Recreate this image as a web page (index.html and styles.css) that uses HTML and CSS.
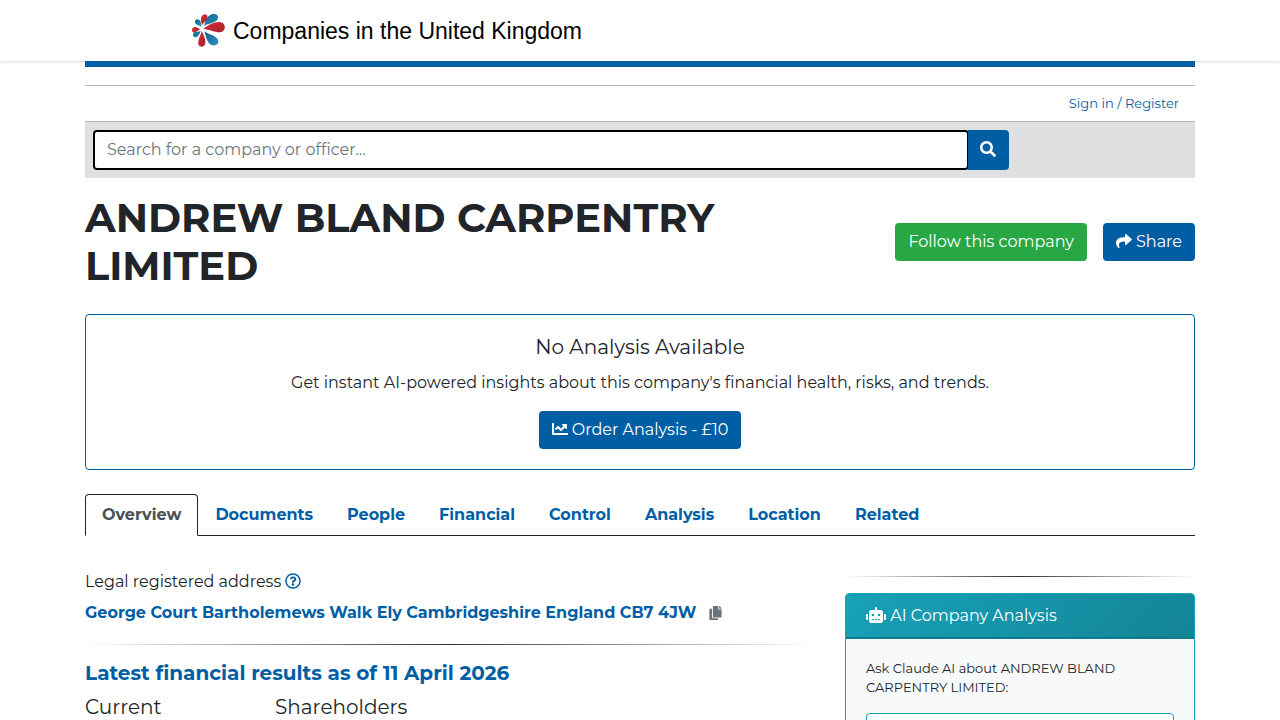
FILE: index.html
```html
<!DOCTYPE html>
<html lang="en">
<head>
  <meta charset="utf-8">
  <meta name="viewport" content="width=device-width, initial-scale=1">
  <title>ANDREW BLAND CARPENTRY LIMITED</title>
  <link rel="stylesheet" href="styles.css">
</head>
<body>
  <header class="site-header">
    <a class="brand" href="#">
      <svg class="logo" viewBox="0 0 99 99" aria-hidden="true">
        <defs>
          <linearGradient id="red" x1="0" y1="0" x2="1" y2="1">
            <stop offset="0" stop-color="#d8323c"/>
            <stop offset="1" stop-color="#a81c28"/>
          </linearGradient>
          <linearGradient id="blue" x1="0" y1="0" x2="1" y2="1">
            <stop offset="0" stop-color="#145f88"/>
            <stop offset="1" stop-color="#2a94bd"/>
          </linearGradient>
        </defs>
        <g fill="url(#red)">
          <path d="M34 44C48 34 64 24 82 24C95 25 100 34 98 43C96 54 86 57 74 54C60 51 48 46 34 44Z"/>
          <path d="M31 33C24 20 25 5 37 1C47 0 49 10 44 18C39 24 34 26 31 33Z"/>
          <path d="M29 52C36 64 43 79 39 91C35 101 22 100 19 91C16 79 26 65 29 52Z"/>
          <path d="M25 46C17 49 10 60 2 54C-3 46 2 38 11 39C17 40 21 45 25 46Z"/>
        </g>
        <g fill="url(#blue)">
          <path d="M37 35C39 20 47 3 63 0C76 -1 82 8 76 17C68 28 49 27 37 35Z"/>
          <path d="M37 52C48 61 68 63 77 76C83 88 74 96 61 94C45 90 42 67 37 52Z"/>
          <path d="M29 38C21 35 7 31 9 21C13 12 23 15 26 23C28 29 27 33 29 38Z"/>
          <path d="M26 50C23 60 19 71 9 70C1 68 1 59 8 55C14 52 20 54 26 50Z"/>
        </g>
      </svg>
      <span>Companies in the United Kingdom</span>
    </a>
  </header>

  <main class="container">
    <div class="account">
      <a href="#">Sign in / Register</a>
    </div>

    <div class="search-bar">
      <form class="search" onsubmit="return false;">
        <input type="text" id="q" aria-label="Search" placeholder="Search for a company or officer..." autofocus>
        <button type="submit" class="btn btn-blue" aria-label="Search">
          <svg class="icon" viewBox="0 0 512 512"><path d="M505 442.700L405.300 343c-4.500-4.500-10.600-7-17-7H372c27.600-35.300 44-79.700 44-128C416 93.100 322.900 0 208 0S0 93.100 0 208s93.100 208 208 208c48.300 0 92.700-16.400 128-44v16.300c0 6.400 2.500 12.500 7 17l99.700 99.700c9.400 9.400 24.600 9.400 33.900 0l28.300-28.300c9.400-9.400 9.400-24.600.1-34zM208 336c-70.700 0-128-57.200-128-128 0-70.700 57.200-128 128-128 70.700 0 128 57.200 128 128 0 70.700-57.200 128-128 128z"/></svg>
        </button>
      </form>
    </div>

    <div class="title-row">
      <h1>ANDREW BLAND CARPENTRY LIMITED</h1>
      <div class="actions">
        <button type="button" class="btn btn-green">Follow this company</button>
        <button type="button" class="btn btn-blue">
          <svg class="icon" viewBox="0 0 512 512"><path d="M503.691 189.836L327.687 37.851C312.281 24.546 288 35.347 288 56.015v80.053C127.371 137.907 0 170.100 0 322.326c0 61.441 39.581 122.309 83.333 154.132 13.653 9.931 33.111-2.533 28.077-18.631C66.066 312.814 132.917 274.316 288 272.085V360c0 20.700 24.300 31.453 39.687 18.164l176.004-152c11.071-9.562 11.086-26.753 0-36.328z"/></svg>
          Share
        </button>
      </div>
    </div>

    <section class="analysis">
      <h5>No Analysis Available</h5>
      <p>Get instant AI-powered insights about this company's financial health, risks, and trends.</p>
      <button type="button" class="btn btn-blue">
        <svg class="icon" viewBox="0 0 512 512"><path d="M496 384H64V80c0-8.840-7.160-16-16-16H16C7.160 64 0 71.160 0 80v336c0 17.670 14.330 32 32 32h464c8.840 0 16-7.160 16-16v-32c0-8.840-7.160-16-16-16zM464 96H345.940c-21.380 0-32.090 25.850-16.970 40.970l32.400 32.400L288 242.750l-73.370-73.370c-12.500-12.500-32.760-12.500-45.250 0l-68.690 68.690c-6.250 6.250-6.250 16.380 0 22.630l22.620 22.620c6.250 6.250 16.380 6.250 22.630 0L192 237.250l73.370 73.370c12.500 12.500 32.760 12.500 45.250 0l96-96 32.400 32.400c15.120 15.120 40.970 4.410 40.970-16.970V112c.01-8.840-7.150-16-15.990-16z"/></svg>
        Order Analysis - £10
      </button>
    </section>

    <nav class="tabs">
      <a href="#" class="active">Overview</a>
      <a href="#">Documents</a>
      <a href="#">People</a>
      <a href="#">Financial</a>
      <a href="#">Control</a>
      <a href="#">Analysis</a>
      <a href="#">Location</a>
      <a href="#">Related</a>
    </nav>

    <div class="columns">
      <div class="overview">
        <p class="label">Legal registered address
          <a href="#" aria-label="Help"><svg class="icon" viewBox="0 0 512 512"><path d="M256 8C119.043 8 8 119.083 8 256c0 136.997 111.043 248 248 248s248-111.003 248-248C504 119.083 392.957 8 256 8zm0 448c-110.532 0-200-89.431-200-200 0-110.495 89.472-200 200-200 110.491 0 200 89.471 200 200 0 110.530-89.431 200-200 200zm107.244-255.200c0 67.052-72.421 68.084-72.421 92.863V300c0 6.627-5.373 12-12 12h-45.647c-6.627 0-12-5.373-12-12v-8.659c0-35.745 27.100-50.034 47.579-61.516 17.561-9.845 28.324-16.541 28.324-29.579 0-17.246-21.999-28.693-39.784-28.693-23.189 0-33.894 10.977-48.942 29.969-4.057 5.120-11.460 6.071-16.666 2.124l-27.824-21.098c-5.107-3.872-6.251-11.066-2.644-16.363C184.846 131.491 214.940 112 261.794 112c49.071 0 101.450 38.304 101.450 88.800zM298 368c0 23.159-18.841 42-42 42s-42-18.841-42-42 18.841-42 42-42 42 18.841 42 42z"/></svg></a>
        </p>
        <p class="address">
          <a href="#">George Court Bartholemews Walk Ely Cambridgeshire England CB7 4JW</a>
          <button type="button" class="copy" aria-label="Copy address">
            <svg viewBox="0 0 448 512"><path d="M320 448v40c0 13.255-10.745 24-24 24H24c-13.255 0-24-10.745-24-24V120c0-13.255 10.745-24 24-24h72v296c0 30.879 25.121 56 56 56h168zm0-344V0H152c-13.255 0-24 10.745-24 24v368c0 13.255 10.745 24 24 24h272c13.255 0 24-10.745 24-24V128H344c-13.200 0-24-10.800-24-24zm120.971-31.029L375.029 7.029A24 24 0 0 0 358.059 0H352v96h96v-6.059a24 24 0 0 0-7.029-16.970z"/></svg>
          </button>
        </p>
        <hr class="fade">
        <h2>Latest financial results as of 11 April 2026</h2>
        <div class="figures">
          <span>Current</span>
          <span>Shareholders</span>
        </div>
      </div>

      <aside class="sidebar">
        <hr class="fade">
        <section class="ai-card">
          <h3>
            <svg class="robot" viewBox="0 0 640 512"><path d="M32 224h32v192H32a32 32 0 0 1-32-32V256a32 32 0 0 1 32-32zm512-48v272a64 64 0 0 1-64 64H160a64 64 0 0 1-64-64V176a80 80 0 0 1 80-80h112V32a32 32 0 0 1 64 0v64h112a80 80 0 0 1 80 80zM264 256a40 40 0 1 0-40 40 40 40 0 0 0 40-40zm-8 128h-64v32h64zm96 0h-64v32h64zm104-128a40 40 0 1 0-40 40 40 40 0 0 0 40-40zm-8 128h-64v32h64zm192-128v128a32 32 0 0 1-32 32h-32V224h32a32 32 0 0 1 32 32z" fill-rule="evenodd"/></svg>
            AI Company Analysis
          </h3>
          <div class="ai-body">
            <label for="question">Ask Claude AI about ANDREW BLAND CARPENTRY LIMITED:</label>
            <textarea id="question" rows="3"></textarea>
          </div>
        </section>
      </aside>
    </div>
  </main>
</body>
</html>
```

FILE: styles.css
```css
* {
  box-sizing: border-box;
}

body {
  margin: 0;
  color: #212529;
  background-color: #fff;
  font-family: Montserrat, Inter, "Open Sans", sans-serif;
  font-size: 16px;
  line-height: 24px;
}

h1, h2, h3, h5, p {
  margin: 0;
}

a {
  color: #005ea5;
  text-decoration: none;
}

.container {
  max-width: 1110px;
  margin: 0 auto;
  border-top: 6px solid #005ea5;
}

/* header */
.site-header {
  padding: 14px 192px;
  box-shadow: 0 1px 3px rgba(0, 0, 0, 0.15);
}

.brand {
  display: flex;
  align-items: center;
  gap: 8px;
  color: #000;
  font-family: "Liberation Sans", Arial, sans-serif;
  font-size: 23px;
}

.logo {
  width: 33px;
  height: 33px;
}

.account {
  margin-top: 18px;
  padding: 5px 16px 6px;
  border-top: 1px solid #b1b4b6;
  border-bottom: 1px solid #b1b4b6;
  text-align: right;
  font-size: 13px;
}

/* search */
.search-bar {
  padding: 8px;
  background-color: #dee0e2;
}

.search {
  display: flex;
  width: 84%;
  max-width: 916px;
}

.search input {
  flex: 1;
  min-width: 0;
  height: 40px;
  padding: 0 12px 2px;
  border: 2px solid #000;
  border-radius: 4px;
  outline: none;
  color: #495057;
  font: inherit;
}

.search input::placeholder {
  color: #6c757d;
}

.search .btn {
  height: 40px;
  margin-left: -1px;
  padding: 0 13px 0 12px;
  border-radius: 0 4px 4px 0;
}

.btn {
  height: 38px;
  padding: 0 13px;
  border: 0;
  border-radius: 4px;
  color: #fff;
  font: inherit;
}

.btn-blue {
  background-color: #005ea5;
}

.btn-green {
  background-color: #28a745;
}

.icon {
  width: 16px;
  height: 16px;
  fill: currentColor;
  vertical-align: -2px;
}

/* company name */
.title-row {
  display: flex;
  align-items: center;
  justify-content: space-between;
  margin: 16px 0 24px;
}

h1 {
  flex: 0 1 730px;
  font-size: 40px;
  line-height: 48px;
}

.actions {
  display: flex;
  gap: 16px;
  white-space: nowrap;
}

.analysis {
  padding: 20px;
  border: 1px solid #005ea5;
  border-radius: 4px;
  text-align: center;
}

.analysis h5 {
  margin-bottom: 12px;
  font-size: 20px;
  font-weight: 400;
}

.analysis p {
  margin-bottom: 16px;
}

/* tabs */
.tabs {
  display: flex;
  margin-top: 24px;
  border-bottom: 1px solid #212529;
  font-weight: 700;
}

.tabs a {
  margin-bottom: -1px;
  padding: 8px 16px;
  border: 1px solid transparent;
  border-radius: 4px 4px 0 0;
}

.tabs .active {
  color: #495057;
  background-color: #fff;
  border-color: #212529 #212529 #fff;
}

/* columns */
.columns {
  display: flex;
  gap: 30px;
  margin-top: 34px;
}

.overview {
  flex: 1;
}

.sidebar {
  flex: 0 0 350px;
  padding-top: 6px;
}

.label {
  margin-bottom: 7px;
}

.address {
  display: flex;
  align-items: center;
  gap: 13px;
  font-weight: 700;
}

.copy {
  display: flex;
  padding: 0;
  border: 0;
  background: none;
  color: #6c757d;
}

.copy svg {
  width: 13px;
  height: 14px;
  fill: currentColor;
}

.fade {
  height: 1px;
  margin: 0 0 16px;
  border: 0;
  background-image: linear-gradient(to right, transparent, #333, transparent);
}

.overview .fade {
  margin-top: 19px;
}

h2 {
  margin-bottom: 10px;
  color: #005ea5;
  font-size: 20px;
}

.figures {
  display: grid;
  grid-template-columns: 190px 1fr;
  font-size: 20px;
}

/* AI card */
.ai-card {
  border: 1px solid #17a2b8;
  border-radius: 4px;
  background-color: #f8f9fa;
}

.ai-card h3 {
  padding: 10px 20px 9px;
  border-bottom: 2px solid #117a8b;
  border-radius: 3px 3px 0 0;
  background-image: linear-gradient(135deg, #17a2b8, #138496);
  color: #fff;
  font-size: 16px;
  font-weight: 400;
}

.robot {
  width: 20px;
  height: 16px;
  fill: currentColor;
  vertical-align: -2px;
}

.ai-body {
  padding: 20px;
}

.ai-body label {
  display: block;
  margin-bottom: 16px;
  font-size: 13px;
  line-height: 19px;
}

.ai-body textarea {
  display: block;
  width: 100%;
  padding: 8px;
  border: 1px solid #17a2b8;
  border-radius: 4px;
  font: inherit;
}
```
